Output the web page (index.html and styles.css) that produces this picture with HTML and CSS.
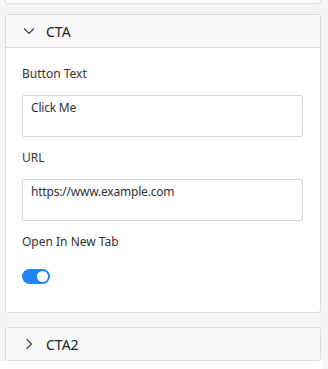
FILE: index.html
```html
<!DOCTYPE html>
<html lang="en">
<head>
  <meta charset="UTF-8" />
  <title>CTA Settings</title>
  <meta name="viewport" content="width=device-width, initial-scale=1.0"/>
  <link rel="stylesheet" href="styles.css">
</head>
<body>
  <div class="sidebar">
    <div class="panel panel-prev"></div>

    <div class="panel">
      <div class="panel-header">
        <svg class="chevron" width="12" height="8" viewBox="0 0 12 8">
          <path d="M1 1.5 L6 6.5 L11 1.5" fill="none" stroke="#444" stroke-width="1.2"/>
        </svg>
        <span>CTA</span>
      </div>
      <div class="panel-body">
        <div class="field">
          <label>Button Text</label>
          <textarea class="input">Click Me</textarea>
        </div>
        <div class="field">
          <label>URL</label>
          <textarea class="input">https://www.example.com</textarea>
        </div>
        <div class="field">
          <label>Open In New Tab</label>
          <div class="toggle on"><span class="knob"></span></div>
        </div>
      </div>
    </div>

    <div class="panel">
      <div class="panel-header">
        <svg class="chevron" width="12" height="12" viewBox="0 0 12 12">
          <path d="M3.5 1 L8.5 6 L3.5 11" fill="none" stroke="#444" stroke-width="1.2"/>
        </svg>
        <span>CTA2</span>
      </div>
    </div>
  </div>
  <div class="footer-strip"></div>
</body>
</html>
```

FILE: styles.css
```css
body {
  margin: 0;
  background: #f4f5f7;
  font-family: 'Noto Sans', sans-serif;
  color: #333;
  height: 369px;
  overflow: hidden;
}

.sidebar {
  width: 316px;
  padding: 0 0 0 5px;
}

.panel {
  background: #fff;
  border: 1px solid #dcdcdc;
  border-radius: 3px;
  margin-bottom: 14px;
}

.panel-prev {
  height: 14px;
  margin-top: -12px;
  margin-bottom: 10px;
}

.panel-header {
  display: flex;
  align-items: center;
  height: 32px;
  padding-left: 17px;
  background: #f9f9f9;
  font-size: 14px;
  color: #222;
}

.chevron {
  margin-right: 11px;
}

.panel-body {
  border-top: 1px solid #dcdcdc;
  padding: 17px 16px 28px 16px;
}

.field {
  display: flex;
  flex-direction: column;
  margin-bottom: 12px;
}

.field:last-child {
  margin-bottom: 0;
}

label {
  font-size: 12px;
  line-height: 18px;
  margin-bottom: 12px;
}

.input {
  box-sizing: border-box;
  width: 281px;
  height: 42px;
  border: 1px solid #d4d4d4;
  border-radius: 2px;
  padding: 3px 8px;
  font-family: 'Noto Sans', sans-serif;
  font-size: 12px;
  letter-spacing: -0.2px;
  color: #333;
  resize: none;
  overflow: hidden;
}

.toggle {
  margin-top: 6px;
  width: 28px;
  height: 15px;
  border-radius: 8px;
  background: #2185f8;
  display: flex;
  align-items: center;
  justify-content: flex-end;
  padding: 0 2px;
  box-sizing: border-box;
}

.knob {
  width: 11px;
  height: 11px;
  border-radius: 50%;
  background: #fff;
}

.footer-strip {
  position: absolute;
  left: 0;
  top: 361px;
  width: 323px;
  height: 8px;
  background: #fff;
}
```
